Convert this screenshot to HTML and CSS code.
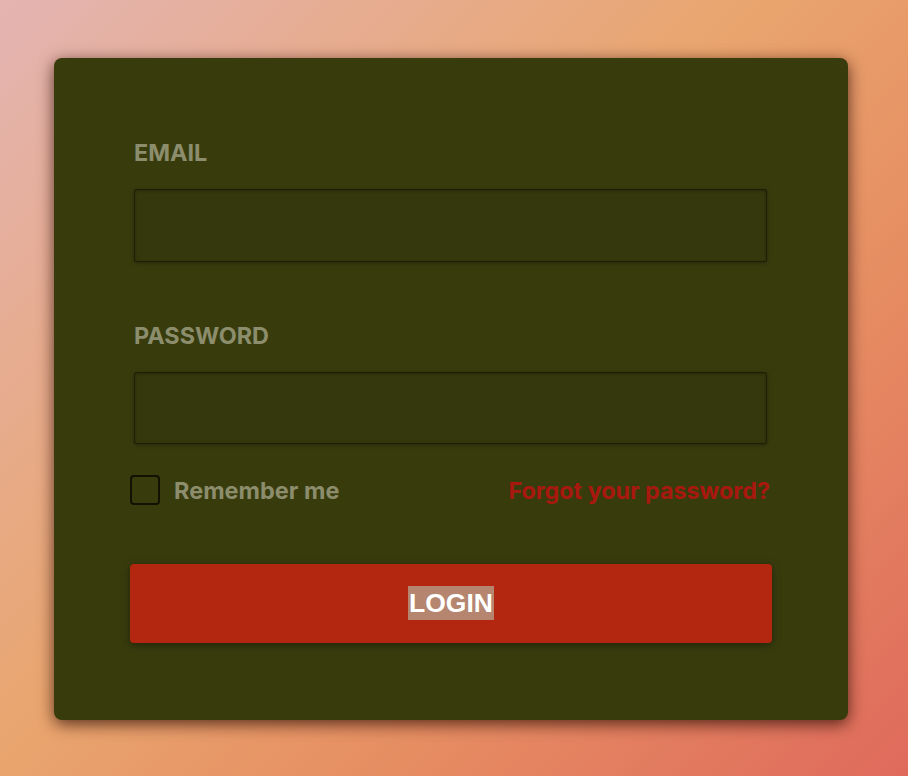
FILE: index.html
```html
<!DOCTYPE html>
<html>
<head>
<meta charset="utf-8">
<link rel="stylesheet" href="styles.css">
</head>
<body>
<div class="page">
  <form class="card">
    <label class="label" for="email">EMAIL</label>
    <input class="field" id="email" type="text">
    <label class="label label-pw" for="pw">PASSWORD</label>
    <input class="field field-pw" id="pw" type="password">
    <div class="row">
      <label class="remember"><span class="box"></span><span>Remember me</span></label>
      <a class="forgot" href="#">Forgot your password?</a>
    </div>
    <button class="login" type="button"><span class="sel">LOGIN</span></button>
  </form>
</div>
</body>
</html>
```
FILE: styles.css
```css
html, body {
  margin: 0;
  padding: 0;
}
body {
  width: 908px;
  height: 776px;
  overflow: hidden;
  font-family: Inter, "Noto Sans", sans-serif;
  background: linear-gradient(135deg, #e4b4b2 0%, #e9a56e 45%, #e68c62 70%, #df6a5c 100%);
}
.page {
  padding: 58px 0 0 54px;
}
.card {
  box-sizing: border-box;
  width: 794px;
  height: 662px;
  background: #383c0d;
  border-radius: 8px;
  box-shadow: 0 4px 16px rgba(40, 10, 0, 0.75);
  padding: 82px 76px 0;
  display: flex;
  flex-direction: column;
}
.label {
  display: block;
  margin: 0 4px;
  font-size: 23.4px;
  line-height: 26px;
  font-weight: 700;
  color: #8c8d6c;
}
.label-pw {
  margin-top: 61px;
}
.field {
  box-sizing: border-box;
  display: block;
  margin: 23px 5px 0 4px;
  height: 73px;
  background: #35380c;
  border: 1px solid #1e2006;
  border-radius: 2px;
  box-shadow: inset 0 1px 3px rgba(0, 0, 0, 0.3), 0 1px 4px rgba(0, 0, 0, 0.35);
  outline: none;
}
.field-pw {
  height: 72px;
}
.row {
  margin-top: 31px;
  display: flex;
  justify-content: space-between;
  align-items: center;
  height: 30px;
}
.remember {
  display: flex;
  align-items: center;
  gap: 14px;
  font-size: 23.5px;
  font-weight: 700;
  color: #8c8d6c;
}
.box {
  box-sizing: border-box;
  width: 30px;
  height: 30px;
  border: 2px solid #111200;
  border-radius: 4px;
}
.forgot {
  font-size: 23.3px;
  font-weight: 700;
  color: #a8180f;
  text-decoration: none;
  margin-right: 2px;
}
.login {
  margin-top: 59px;
  height: 79px;
  border: none;
  border-radius: 4px;
  background: #b3260f;
  box-shadow: 0 2px 8px rgba(0, 0, 0, 0.4);
  font-family: "Liberation Sans", Arial, sans-serif;
  font-size: 26.5px;
  font-weight: 700;
  color: #ffffff;
  padding: 0;
}
.sel {
  background: #b5856f;
  padding: 2px 1px;
}
```
